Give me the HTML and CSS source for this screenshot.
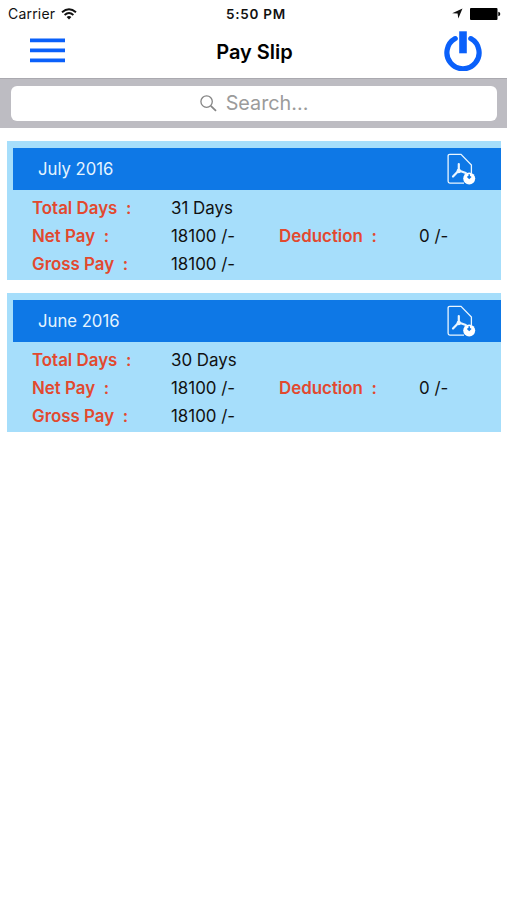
FILE: index.html
```html
<!DOCTYPE html>
<html lang="en">
<head>
<meta charset="utf-8">
<title>Pay Slip</title>
<link rel="stylesheet" href="styles.css">
</head>
<body>
<header class="status">
  <div class="carrier"><span>Carrier</span>
    <svg width="16" height="12" viewBox="0 0 16 12" fill="none" stroke="#111" stroke-width="1.9"><path d="M1 4.2Q8-1.8 15 4.2M3.6 7Q8 3.2 12.4 7"/><path d="M5.6 9Q8 7 10.4 9L8 11.4Z" fill="#111" stroke="none"/></svg>
  </div>
  <div class="time">5:50 PM</div>
  <div class="indicators">
    <svg width="11" height="11" viewBox="0 0 11 11"><path d="M10.5.5 6.3 10.5 5.6 5.6.2 5.2Z" fill="#111"/></svg>
    <svg width="31" height="12" viewBox="0 0 31 12"><rect width="27.5" height="12" rx="1" fill="#000"/><path d="M28.3 3.8Q30.3 4.3 30.3 6T28.3 8.2Z" fill="#000"/></svg>
  </div>
</header>
<nav class="nav">
  <svg class="menu" width="35" height="25" viewBox="0 0 35 25"><path d="M0 2.3H35M0 12.3H35M0 22.3H35" stroke="#0a60fa" stroke-width="3.8"/></svg>
  <h1>Pay Slip</h1>
  <svg class="power" width="38" height="40" viewBox="0 0 38 40" fill="none" stroke="#0a60fa"><path d="M11.2 7.6A16.1 16.1 0 1 0 26.8 7.6" stroke-width="5.2" stroke-linecap="round"/><path d="M19 .3V22.3" stroke-width="7.6"/></svg>
</nav>
<div class="search">
  <div class="field">
    <svg width="17" height="17" viewBox="0 0 17 17" fill="none" stroke="#858585"><circle cx="6.6" cy="6.6" r="5.7" stroke-width="1.3"/><path d="M10.8 10.8 16 15.8" stroke-width="1.8"/></svg>
    <span>Search...</span>
  </div>
</div>
<main>
  <section class="card">
    <div class="month"><h2>July 2016</h2>
      <svg width="30" height="32" viewBox="0 0 30 32" fill="none" stroke="#eaf6ff" stroke-width="1.3"><path d="M25.4 20V12L15 1.4H3.8Q2.1 1.4 2.1 3.1V28.3Q2.1 30.1 3.8 30.1H18"/><path d="M12.8 11V17.5L7 23.5M12.8 17.5 19.8 20" stroke-width="2.2" stroke-linecap="round"/><circle cx="12.8" cy="18" r="1.6" fill="#eaf6ff"/><circle cx="23.2" cy="25.4" r="6" fill="#fff" stroke="none"/><path d="M23.2 21.3V24.5M21.4 23.5 23.2 25.2 25 23.5" stroke="#0e78e6" stroke-width="1.5"/></svg>
    </div>
    <dl>
      <dt class="first">Total Days&nbsp; :</dt><dd>31 Days</dd>
      <dt class="first">Net Pay&nbsp; :</dt><dd>18100 /-</dd><dt>Deduction&nbsp; :</dt><dd>0 /-</dd>
      <dt class="first">Gross Pay&nbsp; :</dt><dd>18100 /-</dd>
    </dl>
  </section>
  <section class="card">
    <div class="month"><h2>June 2016</h2>
      <svg width="30" height="32" viewBox="0 0 30 32" fill="none" stroke="#eaf6ff" stroke-width="1.3"><path d="M25.4 20V12L15 1.4H3.8Q2.1 1.4 2.1 3.1V28.3Q2.1 30.1 3.8 30.1H18"/><path d="M12.8 11V17.5L7 23.5M12.8 17.5 19.8 20" stroke-width="2.2" stroke-linecap="round"/><circle cx="12.8" cy="18" r="1.6" fill="#eaf6ff"/><circle cx="23.2" cy="25.4" r="6" fill="#fff" stroke="none"/><path d="M23.2 21.3V24.5M21.4 23.5 23.2 25.2 25 23.5" stroke="#0e78e6" stroke-width="1.5"/></svg>
    </div>
    <dl>
      <dt class="first">Total Days&nbsp; :</dt><dd>30 Days</dd>
      <dt class="first">Net Pay&nbsp; :</dt><dd>18100 /-</dd><dt>Deduction&nbsp; :</dt><dd>0 /-</dd>
      <dt class="first">Gross Pay&nbsp; :</dt><dd>18100 /-</dd>
    </dl>
  </section>
</main>
</body>
</html>
```
FILE: styles.css
```css
* { box-sizing: border-box; }
body { margin: 0; background: #fff; color: #111; font-family: Inter, "Liberation Sans", sans-serif; }
h1, h2, dl, dd { margin: 0; }
svg { display: block; flex: none; }
.status { height: 27px; padding: 0 6px 0 8px; display: grid; grid-template-columns: 1fr auto 1fr; align-items: center; font-size: 14px; }
.carrier { display: flex; align-items: center; gap: 6px; letter-spacing: 0.2px; }
.time { padding-left: 3px; font-size: 13.5px; font-weight: 600; letter-spacing: 0.75px; }
.indicators { display: flex; justify-content: flex-end; align-items: center; gap: 7px; }
.nav { height: 52px; padding: 0 25px 4px 30px; display: grid; grid-template-columns: 1fr auto 1fr; align-items: center; border-bottom: 1px solid #aaa9af; }
.nav h1 { padding: 3px 3px 0 0; font-size: 20px; font-weight: 600; line-height: 26px; color: #000; }
.power { justify-self: end; }
.search { height: 49px; padding: 7px 10px 7px 11px; background: #bdbcc2; }
.field { height: 35px; padding-bottom: 1px; border-radius: 6px; background: #fff; display: flex; align-items: center; justify-content: center; gap: 9px; color: #9b9b9b; font-size: 19.8px; }
main { padding: 13px 6px 0 7px; display: grid; gap: 13px; }
.card { height: 139px; padding: 7px 0 0 6px; background: #a6defb; }
.month { height: 42px; padding: 0 25px; display: flex; align-items: center; justify-content: space-between; background: #0e78e6; color: #e4f4ff; }
.month h2 { font-size: 16.7px; font-weight: 400; }
dl { padding: 4px 0 0 19px; display: grid; grid-template-columns: 139px 108px 140px 1fr; grid-auto-rows: 28px; align-items: center; font-size: 16.9px; white-space: nowrap; }
dt { color: #e2492f; font-weight: 600; }
dt.first { grid-column: 1; }
```
